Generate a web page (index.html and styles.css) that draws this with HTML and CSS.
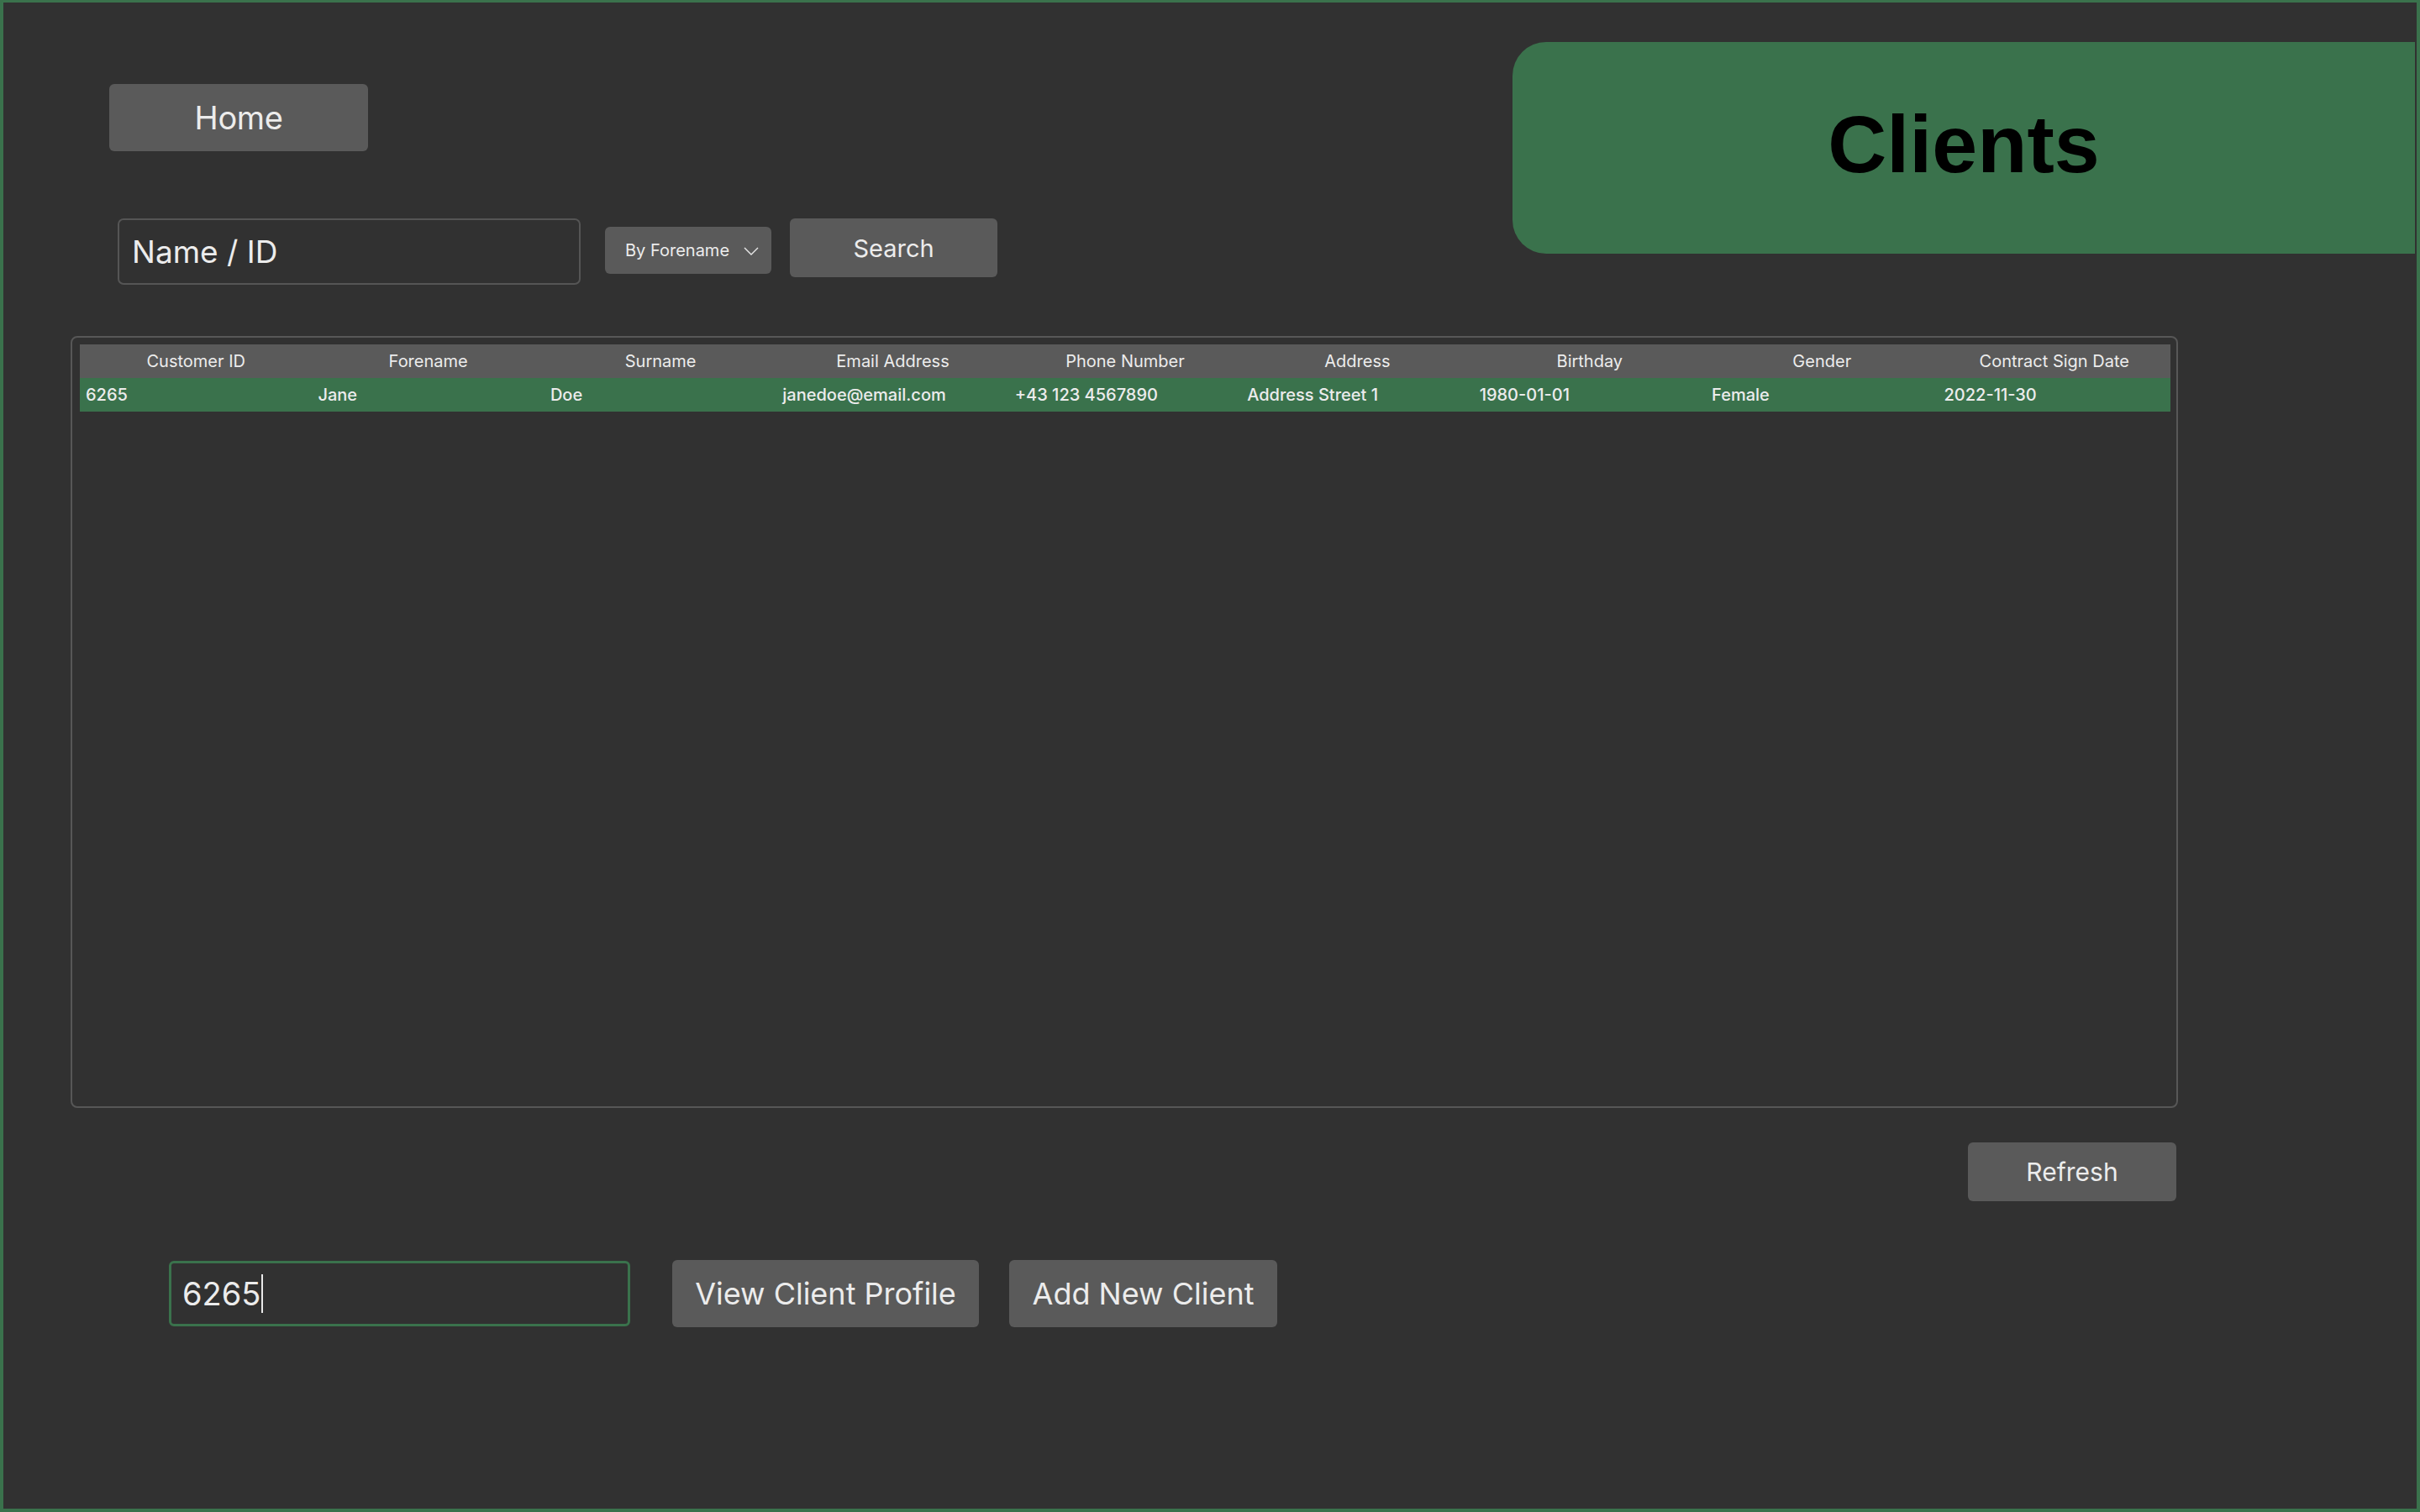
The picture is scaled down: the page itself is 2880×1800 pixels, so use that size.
FILE: index.html
```html
<!DOCTYPE html>
<html lang="en">
<head>
    <meta charset="UTF-8">
    <meta name="viewport" content="width=device-width, initial-scale=1.0">
    <title>Clients</title>
    <link rel="stylesheet" href="styles.css">
</head>
<body>

<div class="window">
    <div class="top">
        <div class="controls">
            <button class="btn btn-home">Home</button>
            <div class="search-row">
                <input class="search-input" type="text" value="Name / ID">
                <div class="select">
                    <span>By Forename</span>
                    <svg class="chevron" width="18" height="10" viewBox="0 0 18 10">
                        <path d="M1 1 L9 9 L17 1" fill="none" stroke="#e8e8e8" stroke-width="1.4"/>
                    </svg>
                </div>
                <button class="btn btn-search">Search</button>
            </div>
        </div>
        <div class="title-panel">
            <h1>Clients</h1>
        </div>
    </div>

    <!-- Tabelle -->
    <div class="table-box">
        <table class="clients-table">
            <thead>
                <tr>
                    <th>Customer ID</th>
                    <th>Forename</th>
                    <th>Surname</th>
                    <th>Email Address</th>
                    <th>Phone Number</th>
                    <th>Address</th>
                    <th>Birthday</th>
                    <th>Gender</th>
                    <th>Contract Sign Date</th>
                </tr>
            </thead>
            <tbody>
                <tr class="selected">
                    <td>6265</td>
                    <td>Jane</td>
                    <td>Doe</td>
                    <td>janedoe@email.com</td>
                    <td>+43 123 4567890</td>
                    <td>Address Street 1</td>
                    <td>1980-01-01</td>
                    <td>Female</td>
                    <td>2022-11-30</td>
                </tr>
            </tbody>
        </table>
    </div>

    <div class="refresh-row">
        <button class="btn btn-refresh">Refresh</button>
    </div>

    <div class="bottom-row">
        <div class="id-field"><span>6265</span><span class="caret"></span></div>
        <button class="btn btn-big btn-view">View Client Profile</button>
        <button class="btn btn-big btn-add">Add New Client</button>
    </div>
</div>

</body>
</html>
```

FILE: styles.css
```css
:root {
    --bg: #313131;
    --green: #3a724c;
    --btn: #5a5a5a;
    --line: #575757;
    --text: #ececec;
}

* { margin: 0; padding: 0; box-sizing: border-box; }

body {
    font-family: Inter, "Liberation Sans", sans-serif;
    background: var(--bg);
    color: var(--text);
}

.window {
    height: 100vh;
    border: 4px solid var(--green);
    border-top-width: 3px;
    background: var(--bg);
    overflow: hidden;
}

.top { display: flex; align-items: flex-start; }

.controls { padding-left: 126px; padding-top: 97px; }

.btn {
    background: var(--btn);
    color: var(--text);
    border: none;
    border-radius: 6px;
    font-family: Inter, "Liberation Sans", sans-serif;
    cursor: pointer;
}

.btn-home { width: 308px; height: 80px; font-size: 38px; letter-spacing: -0.4px; }

.search-row { display: flex; align-items: flex-start; margin-top: 80px; margin-left: 10px; }

.search-input {
    width: 551px; height: 79px;
    background: var(--bg);
    border: 2px solid #555;
    border-radius: 7px;
    padding-left: 15px;
    color: var(--text);
    font-family: Inter, "Liberation Sans", sans-serif;
    font-size: 37px;
    outline: none;
}

.select {
    display: flex; align-items: center; justify-content: space-between;
    width: 198px; height: 56px;
    margin: 10px 22px 0 29px;
    padding: 0 15px 0 24px;
    background: var(--btn);
    border-radius: 6px;
    font-size: 20px;
}
.chevron { margin-top: 2px; }

.btn-search { width: 247px; height: 70px; font-size: 29px; }

.title-panel {
    margin-left: auto;
    margin-top: 47px;
    margin-right: 2px;
    width: 1074px; height: 252px;
    background: var(--green);
    border-radius: 40px 0 0 40px;
    display: flex; align-items: center; justify-content: center;
}
.title-panel h1 {
    font-family: "Liberation Sans", Arial, sans-serif;
    font-size: 97px;
    font-weight: bold;
    color: #000;
    margin-top: -8px;
}

/* Tabelle */
.table-box {
    margin: 61px 0 0 80px;
    width: 2508px; height: 919px;
    border: 2px solid var(--line);
    border-radius: 8px;
    padding: 8px 7px 0 9px;
}
.clients-table { width: 100%; border-collapse: collapse; table-layout: fixed; font-size: 20px; }
.clients-table th {
    background: var(--btn);
    height: 40px;
    font-weight: 400;
    text-align: center;
}
.clients-table td {
    height: 40px;
    padding-left: 7px;
    font-weight: 500;
    white-space: nowrap;
}
.clients-table tr.selected td { background: var(--green); }

.refresh-row { width: 2508px; margin: 41px 0 0 80px; display: flex; justify-content: flex-end; }
.btn-refresh { width: 248px; height: 70px; margin-right: 2px; font-size: 30px; }

.bottom-row { display: flex; align-items: center; margin: 70px 0 0 197px; }

.id-field {
    display: flex; align-items: center;
    width: 549px; height: 78px;
    border: 3px solid var(--green);
    border-radius: 6px;
    padding-left: 13px;
    font-size: 38px;
}
.caret { width: 2px; height: 46px; background: #e8e8e8; margin-left: 1px; }

.btn-big { height: 80px; font-size: 36px; }
.btn-view { width: 365px; margin-left: 50px; }
.btn-add { width: 319px; margin-left: 36px; }
```
